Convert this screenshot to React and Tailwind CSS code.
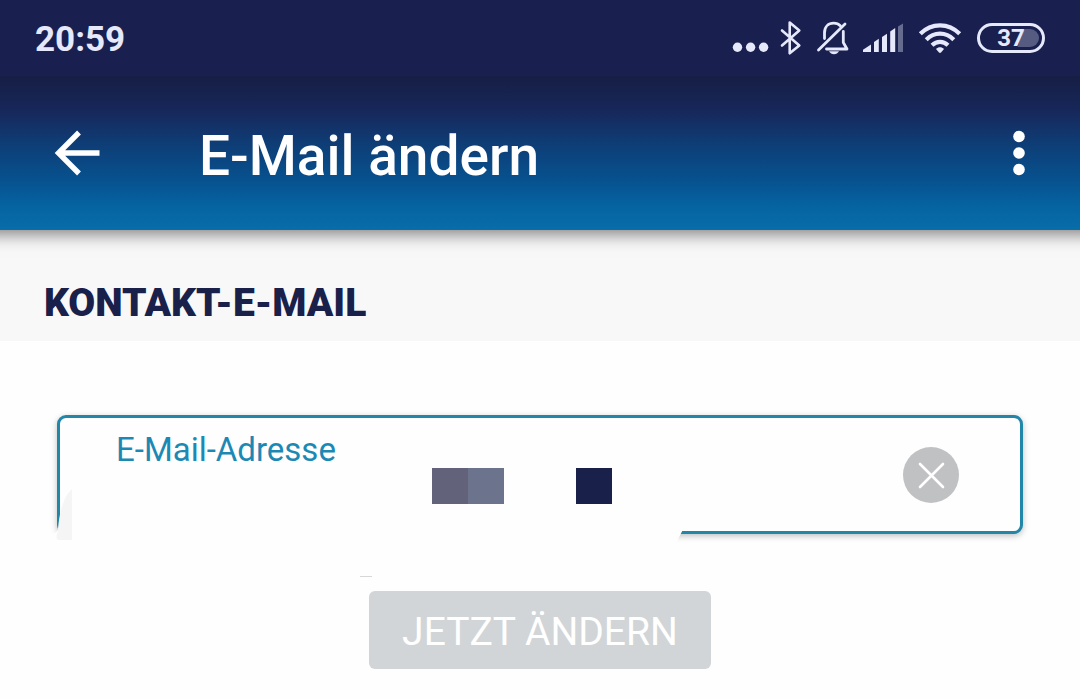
import React from "react";

function StatusBar() {
  return (
    <div className="relative z-10 flex h-[76px] items-center justify-between bg-[#19204f] px-[35px] text-[#e6e8fb]">
      <time className="pt-1 text-[35px] leading-10 font-bold">20:59</time>
      <div className="flex items-center gap-2.5">
        <svg width="40" height="36" viewBox="730 20 40 36" fill="currentColor" aria-hidden="true">
          <circle cx="737.5" cy="47.3" r="4.7" />
          <circle cx="750.6" cy="47.3" r="4.7" />
          <circle cx="763.6" cy="47.3" r="4.7" />
        </svg>
        <svg width="24" height="36" viewBox="780 20 24 36" fill="none" stroke="currentColor" strokeWidth="2.6" strokeLinejoin="round" strokeLinecap="round" aria-hidden="true">
          <path d="M782 30.5 L799.3 45.5 L789.7 53.3 V22.5 L799.3 30.5 L782 45.5" />
        </svg>
        <svg width="37" height="36" viewBox="814 20 37 36" fill="none" stroke="currentColor" strokeWidth="2.8" strokeLinecap="round" strokeLinejoin="round" aria-hidden="true">
          <path d="M824.5 38.5 V33 C824.5 26.5 828.5 23.2 833.7 23.2 C836.6 23.2 838.8 24.2 840.3 25.8" />
          <path d="M843.3 31.5 V42.5 L847 49 H826.5" />
          <path d="M845 24 L818.5 50" />
          <path d="M829 51.3 H839 C837.8 53.3 836.2 54.3 834 54.3 C831.8 54.3 830.2 53.3 829 51.3 Z" fill="currentColor" stroke="none" />
        </svg>
        <svg width="44" height="36" viewBox="861 20 44 36" fill="currentColor" aria-hidden="true">
          <path d="M863 52 V49.8 L871 44.5 V52 Z" />
          <path d="M874 52 V42 L878.8 38.8 V52 Z" />
          <path d="M882 52 V37 L887 33.8 V52 Z" />
          <path d="M890.2 52 V31.5 L895.2 28 V52 Z" />
          <path d="M898 52 V26.5 L903 23.5 V52 Z" opacity="0.38" />
        </svg>
        <svg width="52" height="36" viewBox="915 20 52 36" fill="none" stroke="currentColor" strokeWidth="4.2" aria-hidden="true">
          <path d="M920.3 33.8 C931.5 22.5 948.5 22.5 959.7 33.8" />
          <path d="M926.2 39.7 C934.2 31.7 945.8 31.7 953.8 39.7" />
          <path d="M932 45.3 C936.8 40.8 943.2 40.8 948 45.3" />
          <path d="M936 49 C938.2 46.8 941.8 46.8 944 49 L941 52.5 Q940 53.4 939 52.5 Z" fill="currentColor" stroke="none" />
        </svg>
        <div className="flex h-[30px] w-[68px] items-center rounded-full border-3 border-[#e6e8fb] p-[3px]">
          <span className="flex h-[18px] w-full items-center justify-center rounded-full bg-[linear-gradient(105deg,transparent_64%,#555b81_66%)] text-[24px] leading-6 font-bold">
            37
          </span>
        </div>
      </div>
    </div>
  );
}

function AppBar() {
  return (
    <header className="relative flex h-[154px] items-center bg-[linear-gradient(#161e44_0%,#17275a_22%,#0e3e77_45%,#06528f_68%,#0565a2_86%,#086da9_100%)] px-[35px] text-white shadow-[0_-16px_16px_20px_rgba(0,0,0,0.5)]">
      <button type="button" aria-label="Zurück" className="p-4">
        <svg width="52" height="48" viewBox="51 129 52 48" fill="none" stroke="currentColor" strokeWidth="5.4" aria-hidden="true">
          <path d="M99.5 153 H59 M79 132.5 L58.5 153 L79 173.5" />
        </svg>
      </button>
      <h1 className="ml-20 flex-1 pt-1.5 text-[55px] leading-16 font-medium">E-Mail ändern</h1>
      <button type="button" aria-label="Weitere Optionen" className="px-4 py-3">
        <svg width="20" height="48" viewBox="1009 129 20 48" fill="currentColor" aria-hidden="true">
          <circle cx="1019" cy="136.5" r="5.8" />
          <circle cx="1019" cy="153" r="5.8" />
          <circle cx="1019" cy="169.5" r="5.8" />
        </svg>
      </button>
    </header>
  );
}

function EmailField() {
  return (
    <div className="relative flex h-[119px] items-center rounded-[9px] border-3 border-[#2286a8] bg-[#fefefe] pr-[61px] pl-[56px] shadow-[0_2px_6px_rgba(0,0,0,0.25)]">
      <div className="flex flex-1 flex-col pb-0.5">
        <label htmlFor="email" className="text-[33px] leading-10 text-[#1c89b4]">E-Mail-Adresse</label>
        <input id="email" type="email" className="h-12 w-full bg-transparent text-[33px] text-[#19204f] outline-none" />
      </div>
      <button type="button" aria-label="Eingabe löschen" className="flex size-14 items-center justify-center rounded-full bg-[#c0c1c3] text-white">
        <svg width="28" height="28" viewBox="0 0 28 28" fill="none" stroke="currentColor" strokeWidth="2.6" strokeLinecap="round" aria-hidden="true">
          <path d="M3 3 L26 26 M26 3 L3 26" />
        </svg>
      </button>
      <svg className="pointer-events-none absolute -bottom-[49px] -left-[10px]" width="640" height="112" viewBox="50 468 640 112" aria-hidden="true">
        <path d="M50 538 L58 530 L62 512 L72 490 H640 L690 516 L675 545 V580 H50 Z" fill="#fefefe" />
        <path d="M72 489 C64 496 59 512 58 530 C57 535 55 538 58 540 H72 Z" fill="#f5f5f5" />
        <path d="M432 468 h36 v36 h-36 Z" fill="#62637b" />
        <path d="M468 468 h36 v36 h-36 Z" fill="#6c738c" />
        <path d="M576 468 h36 v36 h-36 Z" fill="#19214a" />
        <path d="M360 576 h12 v1 h-12 Z" fill="#d5d7d8" />
      </svg>
    </div>
  );
}

export default function App() {
  return (
    <div className="min-h-screen overflow-x-clip bg-[#fefefe] font-['Roboto',sans-serif]">
      <StatusBar />
      <AppBar />
      <main>
        <div className="bg-[#f8f8f9] px-11 pt-[51px] pb-[16px]">
          <h2 className="text-[39px] leading-11 font-black text-[#19204a]">KONTAKT-E-MAIL</h2>
        </div>
        <form className="px-[57px] pt-[74px] pb-[30px]" onSubmit={(e) => e.preventDefault()}>
          <EmailField />
          <div className="mt-[57px] flex justify-center">
            <button type="submit" className="h-[78px] rounded-md bg-[#d1d5d7] px-[33px] pt-1 text-[39px] leading-12 text-white">
              JETZT ÄNDERN
            </button>
          </div>
        </form>
      </main>
    </div>
  );
}
